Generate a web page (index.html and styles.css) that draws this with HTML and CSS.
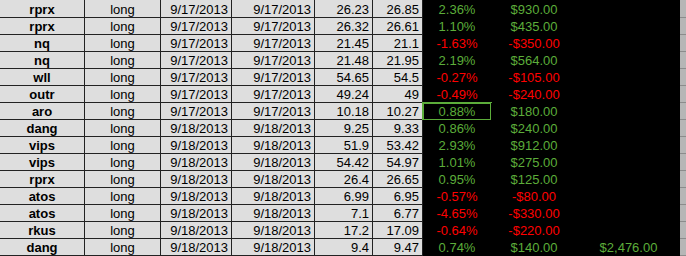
FILE: index.html
```html
<!DOCTYPE html>
<html>
<head>
<meta charset="utf-8">
<link rel="stylesheet" href="styles.css">
</head>
<body>
<div class="sheet">
  <div class="row"><div class="c sym">rprx</div><div class="c mid">long</div><div class="c num">9/17/2013</div><div class="c num">9/17/2013</div><div class="c num">26.23</div><div class="c num">26.85</div><div class="d up">2.36%</div><div class="d up">$930.00</div><div class="d"></div><div class="s"></div></div>
  <div class="row"><div class="c sym">rprx</div><div class="c mid">long</div><div class="c num">9/17/2013</div><div class="c num">9/17/2013</div><div class="c num">26.32</div><div class="c num">26.61</div><div class="d up">1.10%</div><div class="d up">$435.00</div><div class="d"></div><div class="s"></div></div>
  <div class="row"><div class="c sym">nq</div><div class="c mid">long</div><div class="c num">9/17/2013</div><div class="c num">9/17/2013</div><div class="c num">21.45</div><div class="c num">21.1</div><div class="d dn">-1.63%</div><div class="d dn">-$350.00</div><div class="d"></div><div class="s"></div></div>
  <div class="row"><div class="c sym">nq</div><div class="c mid">long</div><div class="c num">9/17/2013</div><div class="c num">9/17/2013</div><div class="c num">21.48</div><div class="c num">21.95</div><div class="d up">2.19%</div><div class="d up">$564.00</div><div class="d"></div><div class="s"></div></div>
  <div class="row"><div class="c sym">wll</div><div class="c mid">long</div><div class="c num">9/17/2013</div><div class="c num">9/17/2013</div><div class="c num">54.65</div><div class="c num">54.5</div><div class="d dn">-0.27%</div><div class="d dn">-$105.00</div><div class="d"></div><div class="s"></div></div>
  <div class="row"><div class="c sym">outr</div><div class="c mid">long</div><div class="c num">9/17/2013</div><div class="c num">9/17/2013</div><div class="c num">49.24</div><div class="c num">49</div><div class="d dn">-0.49%</div><div class="d dn">-$240.00</div><div class="d"></div><div class="s"></div></div>
  <div class="row"><div class="c sym">aro</div><div class="c mid">long</div><div class="c num">9/17/2013</div><div class="c num">9/17/2013</div><div class="c num">10.18</div><div class="c num">10.27</div><div class="d up sel">0.88%</div><div class="d up">$180.00</div><div class="d"></div><div class="s"></div></div>
  <div class="row"><div class="c sym">dang</div><div class="c mid">long</div><div class="c num">9/18/2013</div><div class="c num">9/18/2013</div><div class="c num">9.25</div><div class="c num">9.33</div><div class="d up">0.86%</div><div class="d up">$240.00</div><div class="d"></div><div class="s"></div></div>
  <div class="row"><div class="c sym">vips</div><div class="c mid">long</div><div class="c num">9/18/2013</div><div class="c num">9/18/2013</div><div class="c num">51.9</div><div class="c num">53.42</div><div class="d up">2.93%</div><div class="d up">$912.00</div><div class="d"></div><div class="s"></div></div>
  <div class="row"><div class="c sym">vips</div><div class="c mid">long</div><div class="c num">9/18/2013</div><div class="c num">9/18/2013</div><div class="c num">54.42</div><div class="c num">54.97</div><div class="d up">1.01%</div><div class="d up">$275.00</div><div class="d"></div><div class="s"></div></div>
  <div class="row"><div class="c sym">rprx</div><div class="c mid">long</div><div class="c num">9/18/2013</div><div class="c num">9/18/2013</div><div class="c num">26.4</div><div class="c num">26.65</div><div class="d up">0.95%</div><div class="d up">$125.00</div><div class="d"></div><div class="s"></div></div>
  <div class="row"><div class="c sym">atos</div><div class="c mid">long</div><div class="c num">9/18/2013</div><div class="c num">9/18/2013</div><div class="c num">6.99</div><div class="c num">6.95</div><div class="d dn">-0.57%</div><div class="d dn">-$80.00</div><div class="d"></div><div class="s"></div></div>
  <div class="row"><div class="c sym">atos</div><div class="c mid">long</div><div class="c num">9/18/2013</div><div class="c num">9/18/2013</div><div class="c num">7.1</div><div class="c num">6.77</div><div class="d dn">-4.65%</div><div class="d dn">-$330.00</div><div class="d"></div><div class="s"></div></div>
  <div class="row"><div class="c sym">rkus</div><div class="c mid">long</div><div class="c num">9/18/2013</div><div class="c num">9/18/2013</div><div class="c num">17.2</div><div class="c num">17.09</div><div class="d dn">-0.64%</div><div class="d dn">-$220.00</div><div class="d"></div><div class="s"></div></div>
  <div class="row"><div class="c sym">dang</div><div class="c mid">long</div><div class="c num">9/18/2013</div><div class="c num">9/18/2013</div><div class="c num">9.4</div><div class="c num">9.47</div><div class="d up">0.74%</div><div class="d up">$140.00</div><div class="d up">$2,476.00</div><div class="s"></div></div>
</div>
</body>
</html>
```

FILE: styles.css
```css
html, body {
  margin: 0;
  padding: 0;
  background: #000;
}
.sheet {
  display: grid;
  grid-template-columns: 85px 76px 71px 83px 58px 50px 68px 86px 103px 6px;
  grid-template-rows: 18px repeat(14, 17px);
  width: 686px;
  height: 256px;
  font-family: "Liberation Sans", Arial, sans-serif;
  font-size: 13px;
  color: #000;
}
.row {
  display: contents;
}
.c, .d, .s {
  box-sizing: border-box;
  line-height: 15px;
  padding-top: 1px;
  white-space: nowrap;
  overflow: visible;
}
.c {
  background: #dedede;
  border-right: 1px solid #222;
  border-bottom: 1px solid #222;
}
.sym {
  font-weight: bold;
  text-align: center;
}
.mid {
  text-align: center;
}
.num {
  text-align: right;
  padding-right: 3px;
}
.d {
  background: #000;
  text-align: center;
}
.up {
  color: #5cad3a;
}
.dn {
  color: #ff0000;
}
.sel {
  outline: 2px solid #5cad3a;
  outline-offset: -1px;
}
.s {
  background: #b6b6b6;
  border-bottom: 1px solid #8c8c8c;
}
.row:first-child .c,
.row:first-child .d {
  padding-top: 2px;
}
```
